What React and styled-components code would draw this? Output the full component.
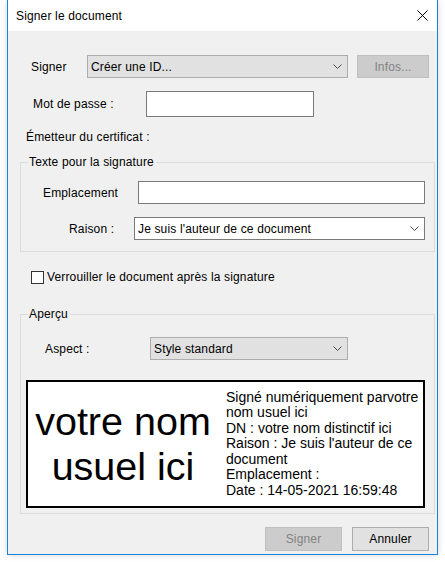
import React from "react";
import styled, { createGlobalStyle } from "styled-components";

const GlobalStyle = createGlobalStyle`
  html, body {
    margin: 0;
    padding: 0;
    background: #ffffff;
  }
  body {
    width: 445px;
    height: 562px;
    overflow: hidden;
    font-family: "Liberation Sans", Arial, sans-serif;
  }
`;

const Window = styled.div`
  box-sizing: border-box;
  width: 431px;
  height: 555px;
  margin-left: 7px;
  border: 1px solid #1883d7;
  border-top: none;
  background: #f0f0f0;
  box-shadow: 0 0 7px rgba(0, 0, 0, 0.16);
  display: flex;
  flex-direction: column;
  font-size: 12px;
  letter-spacing: 0.15px;
  color: #000;
`;

const TitleBar = styled.div`
  height: 31px;
  flex-shrink: 0;
  background: #ffffff;
  display: flex;
  align-items: center;
  justify-content: space-between;
  padding: 0 9px 0 8px;
`;

const Title = styled.span`
  font-size: 12px;
`;

const CloseIcon = styled.svg`
  display: block;
  margin-top: -1px;
`;

const Body = styled.div`
  flex: 1;
  display: flex;
  flex-direction: column;
`;

const Row = styled.div`
  display: flex;
  align-items: center;
  margin-top: ${(p) => p.$top || 0}px;
  padding-left: ${(p) => p.$indent || 0}px;
`;

const Label = styled.span`
  width: ${(p) => p.$w}px;
  flex-shrink: 0;
  white-space: nowrap;
`;

const Line = styled.div`
  margin-top: ${(p) => p.$top}px;
  padding-left: ${(p) => p.$indent}px;
  line-height: 16px;
`;

const Select = styled.div`
  box-sizing: border-box;
  width: ${(p) => p.$w}px;
  height: 23px;
  display: flex;
  align-items: center;
  justify-content: space-between;
  padding: 0 5px 0 3px;
  background: ${(p) => (p.$white ? "#ffffff" : "#e1e1e1")};
  border: 1px solid ${(p) => (p.$white ? "#7a7a7a" : "#adadad")};
`;

const Input = styled.div`
  box-sizing: border-box;
  width: ${(p) => p.$w}px;
  height: ${(p) => p.$h}px;
  background: #ffffff;
  border: 1px solid #7a7a7a;
`;

const Button = styled.div`
  box-sizing: border-box;
  width: ${(p) => p.$w}px;
  height: ${(p) => p.$h || 24}px;
  margin-left: ${(p) => p.$gap || 0}px;
  display: flex;
  align-items: center;
  justify-content: center;
  background: ${(p) => (p.$disabled ? "#cccccc" : "#e1e1e1")};
  border: 1px solid ${(p) => (p.$disabled ? "#bfbfbf" : "#adadad")};
  color: ${(p) => (p.$disabled ? "#838383" : "#000")};
`;

const Group = styled.fieldset`
  box-sizing: border-box;
  width: 415px;
  margin: ${(p) => p.$top}px 0 0 12px;
  padding: ${(p) => p.$padTop}px 0 ${(p) => p.$padBottom}px 5px;
  border: 1px solid #dcdcdc;
  min-inline-size: 0;
`;

const Legend = styled.legend`
  margin-left: 2px;
  padding: 0 2px 0 1px;
  line-height: 14px;
  font-size: 12px;
`;

const CheckBox = styled.span`
  box-sizing: border-box;
  width: 13px;
  height: 13px;
  background: #ffffff;
  border: 1px solid #333333;
  margin-right: 3px;
`;

const Preview = styled.div`
  box-sizing: border-box;
  width: 399px;
  height: 128px;
  margin-top: 20px;
  border: 2px solid #000;
  background: #ffffff;
  display: flex;
  align-items: center;
  font-family: "Liberation Sans", Arial, sans-serif;
  letter-spacing: 0;
`;

const NameBlock = styled.div`
  width: 190px;
  flex-shrink: 0;
  text-align: center;
  font-size: 39.5px;
  line-height: 45px;
`;

const DetailBlock = styled.div`
  width: 197px;
  margin-left: 8px;
  font-size: 14px;
  line-height: 15.5px;
`;

const Footer = styled.div`
  display: flex;
  justify-content: flex-end;
  gap: 10px;
  margin-top: 13px;
  padding-right: 8px;
`;

const Chevron = () => (
  <svg width="9" height="5" viewBox="0 0 9 5">
    <polyline points="0.5,0.5 4.5,4.5 8.5,0.5" fill="none" stroke="#4a4a4a" strokeWidth="1" />
  </svg>
);

export default function App() {
  return (
    <>
      <GlobalStyle />
      <Window>
        <TitleBar>
          <Title>Signer le document</Title>
          <CloseIcon width="11" height="11" viewBox="0 0 11 11">
            <line x1="0.5" y1="0.5" x2="10.5" y2="10.5" stroke="#000" strokeWidth="1" />
            <line x1="10.5" y1="0.5" x2="0.5" y2="10.5" stroke="#000" strokeWidth="1" />
          </CloseIcon>
        </TitleBar>
        <Body>
          <Row $top={24} $indent={23}>
            <Label $w={56}>Signer</Label>
            <Select $w={261}>
              <span>Créer une ID...</span>
              <Chevron />
            </Select>
            <Button $w={72} $h={23} $gap={9} $disabled>
              Infos...
            </Button>
          </Row>
          <Row $top={13} $indent={25}>
            <Label $w={113}>Mot de passe :</Label>
            <Input $w={168} $h={26} />
          </Row>
          <Line $top={12} $indent={18}>Émetteur du certificat :</Line>

          <Group $top={10} $padTop={12} $padBottom={11}>
            <Legend>Texte pour la signature</Legend>
            <Row $indent={17}>
              <Label $w={95}>Emplacement</Label>
              <Input $w={287} $h={23} />
            </Row>
            <Row $top={13} $indent={43}>
              <Label $w={65}>Raison :</Label>
              <Select $w={291} $white>
                <span>Je suis l'auteur de ce document</span>
                <Chevron />
              </Select>
            </Row>
          </Group>

          <Row $top={18} $indent={23}>
            <CheckBox />
            <span>Verrouiller le document après la signature</span>
          </Row>

          <Group $top={23} $padTop={16} $padBottom={5}>
            <Legend>Aperçu</Legend>
            <Row $indent={19}>
              <Label $w={105}>Aspect :</Label>
              <Select $w={198}>
                <span>Style standard</span>
                <Chevron />
              </Select>
            </Row>
            <Preview>
              <NameBlock>
                votre nom
                <br />
                usuel ici
              </NameBlock>
              <DetailBlock>
                Signé numériquement parvotre nom usuel ici
                <br />
                DN : votre nom distinctif ici
                <br />
                Raison : Je suis l'auteur de ce document
                <br />
                Emplacement :
                <br />
                Date : 14-05-2021 16:59:48
              </DetailBlock>
            </Preview>
          </Group>

          <Footer>
            <Button $w={77} $disabled>
              Signer
            </Button>
            <Button $w={77}>Annuler</Button>
          </Footer>
        </Body>
      </Window>
    </>
  );
}
